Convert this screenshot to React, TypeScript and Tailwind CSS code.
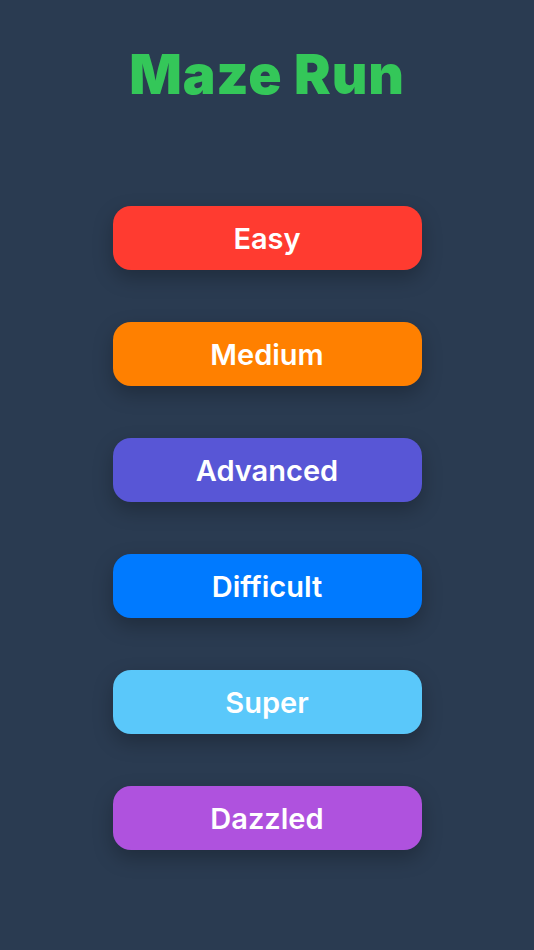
const levels = [
  { name: 'Easy', color: 'bg-[#ff3b30]' },
  { name: 'Medium', color: 'bg-[#ff8000]' },
  { name: 'Advanced', color: 'bg-[#5856d6]' },
  { name: 'Difficult', color: 'bg-[#007aff]' },
  { name: 'Super', color: 'bg-[#5ac8fa]' },
  { name: 'Dazzled', color: 'bg-[#af52de]' },
];

export default function App() {
  return (
    <div className="min-h-screen h-[950px] bg-[#2a3b51] flex flex-col items-center font-['Inter',sans-serif]">
      <h1 className="mt-[43px] text-[55px] leading-[62px] font-black text-[#34c759] tracking-[0.8px]">
        Maze Run
      </h1>
      <div className="mt-[101px] flex flex-col gap-[52px]">
        {levels.map((level) => (
          <button
            key={level.name}
            className={`w-[309px] h-[64px] rounded-[18px] ${level.color} text-white text-[29px] font-semibold pt-[2px] shadow-[0_8px_20px_rgba(0,0,0,0.25)]`}
          >
            {level.name}
          </button>
        ))}
      </div>
    </div>
  );
}
